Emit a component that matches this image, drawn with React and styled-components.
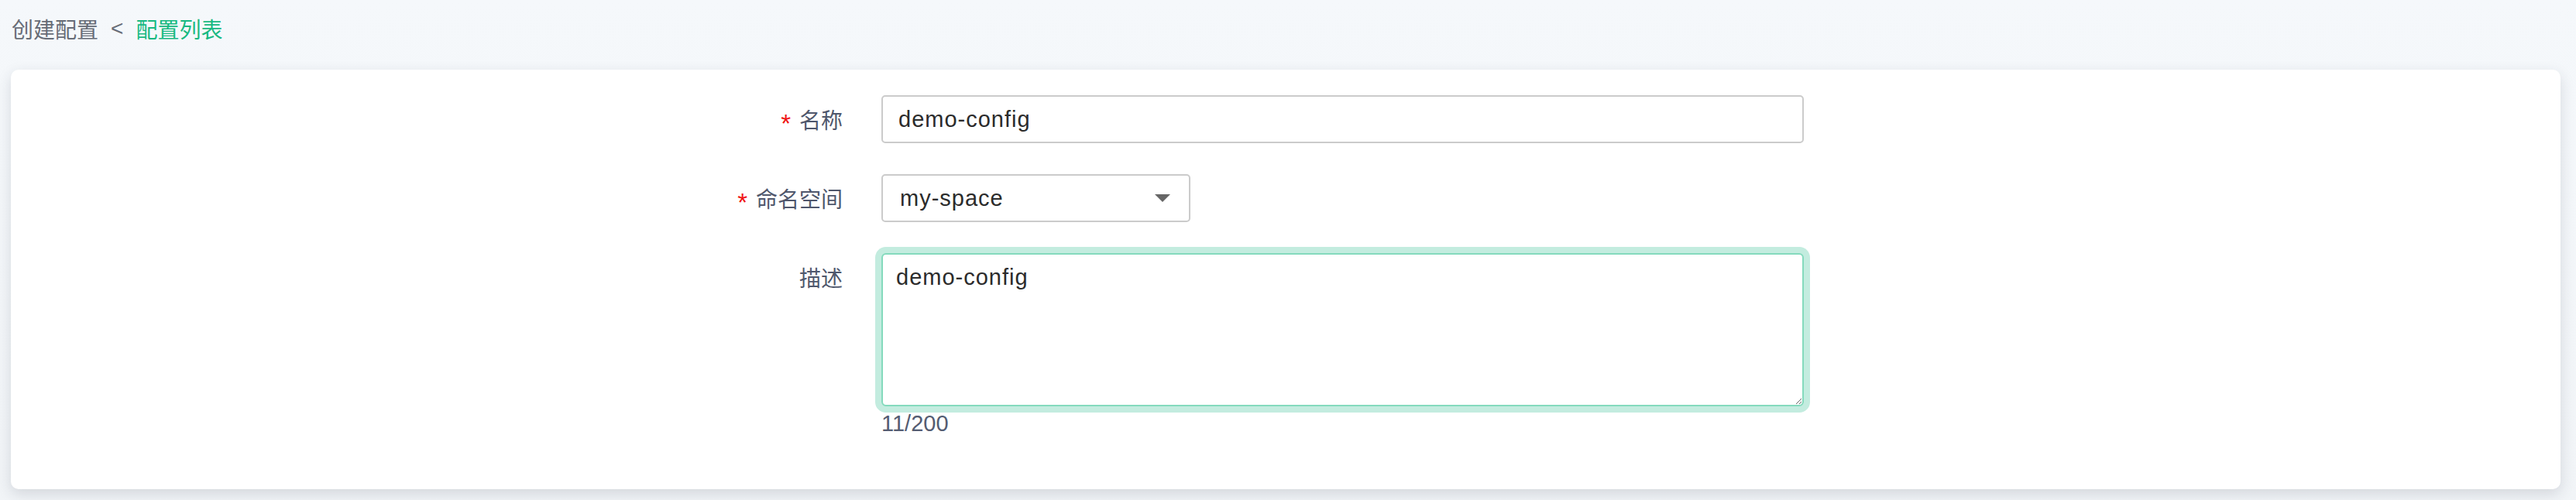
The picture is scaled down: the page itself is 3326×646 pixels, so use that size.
import React, { useState } from "react";
import styled, { createGlobalStyle } from "styled-components";

const GlobalStyle = createGlobalStyle`
  html, body {
    margin: 0;
    padding: 0;
    background: #f4f7fa;
  }
  body {
    font-family: "Liberation Sans", "Noto Sans CJK SC", sans-serif;
  }
  * {
    box-sizing: border-box;
  }
`;

const Page = styled.div`
  min-height: 100vh;
  background: linear-gradient(180deg, #f5f8fb 0%, #f1f4f7 100%);
  overflow: hidden;
`;

const Breadcrumb = styled.div`
  height: 74px;
  padding: 0 15px;
  display: flex;
  align-items: center;
  gap: 16px;
  font-size: 28px;
  color: #676c77;
`;

const Crumb = styled.span`
  color: ${(p) => (p.active ? "#18b981" : "#676c77")};
  cursor: ${(p) => (p.active ? "pointer" : "default")};
`;

const Card = styled.div`
  margin: 16px 20px 0 14px;
  height: 542px;
  padding: 33px 0 0;
  background: #fff;
  border-radius: 10px;
  box-shadow: 0 6px 18px rgba(40, 50, 70, 0.15);
`;

const Row = styled.div`
  display: flex;
  align-items: flex-start;
  margin-bottom: 40px;
`;

const Label = styled.div`
  width: 1074px;
  margin-right: 50px;
  height: 62px;
  display: flex;
  align-items: center;
  justify-content: flex-end;
  font-size: 28px;
  color: #4f576c;
`;

const Required = styled.span`
  color: #f01414;
  font-size: 33px;
  margin-right: 11px;
  transform: translateY(6px);
`;

const TextInput = styled.input`
  width: 1191px;
  height: 62px;
  padding: 0 20px;
  border: 2px solid #cbcbcb;
  border-radius: 5px;
  font-family: inherit;
  font-size: 29px;
  letter-spacing: 1px;
  color: #2b2b2b;
  outline: none;
`;

const SelectBox = styled.div`
  width: 399px;
  height: 62px;
  padding: 0 24px 0 22px;
  border: 2px solid #cbcbcb;
  border-radius: 5px;
  display: flex;
  align-items: center;
  justify-content: space-between;
  font-size: 29px;
  letter-spacing: 1px;
  color: #2b2b2b;
  cursor: pointer;
`;

const Caret = styled.span`
  width: 0;
  height: 0;
  border-left: 10px solid transparent;
  border-right: 10px solid transparent;
  border-top: 10px solid #666;
`;

const Field = styled.div`
  display: flex;
  flex-direction: column;
`;

const TextArea = styled.textarea`
  width: 1191px;
  height: 198px;
  padding: 9px 17px;
  border: 2px solid #84dabd;
  border-radius: 6px;
  box-shadow: 0 0 0 8px #c3ecdf;
  font-family: inherit;
  font-size: 29px;
  line-height: 40px;
  letter-spacing: 1px;
  color: #2b2b2b;
  outline: none;
  resize: both;
`;

const Counter = styled.div`
  height: 40px;
  line-height: 44px;
  font-size: 29px;
  color: #545c72;
`;

export default function App() {
  const [name, setName] = useState("demo-config");
  const [desc, setDesc] = useState("demo-config");

  return (
    <Page>
      <GlobalStyle />
      <Breadcrumb>
        <Crumb>创建配置</Crumb>
        <span>&lt;</span>
        <Crumb active>配置列表</Crumb>
      </Breadcrumb>
      <Card>
        <Row>
          <Label>
            <Required>*</Required>名称
          </Label>
          <TextInput value={name} onChange={(e) => setName(e.target.value)} />
        </Row>
        <Row>
          <Label>
            <Required>*</Required>命名空间
          </Label>
          <SelectBox>
            my-space
            <Caret />
          </SelectBox>
        </Row>
        <Row>
          <Label>描述</Label>
          <Field>
            <TextArea
              value={desc}
              maxLength={200}
              onChange={(e) => setDesc(e.target.value)}
            />
            <Counter>{desc.length}/200</Counter>
          </Field>
        </Row>
      </Card>
    </Page>
  );
}
